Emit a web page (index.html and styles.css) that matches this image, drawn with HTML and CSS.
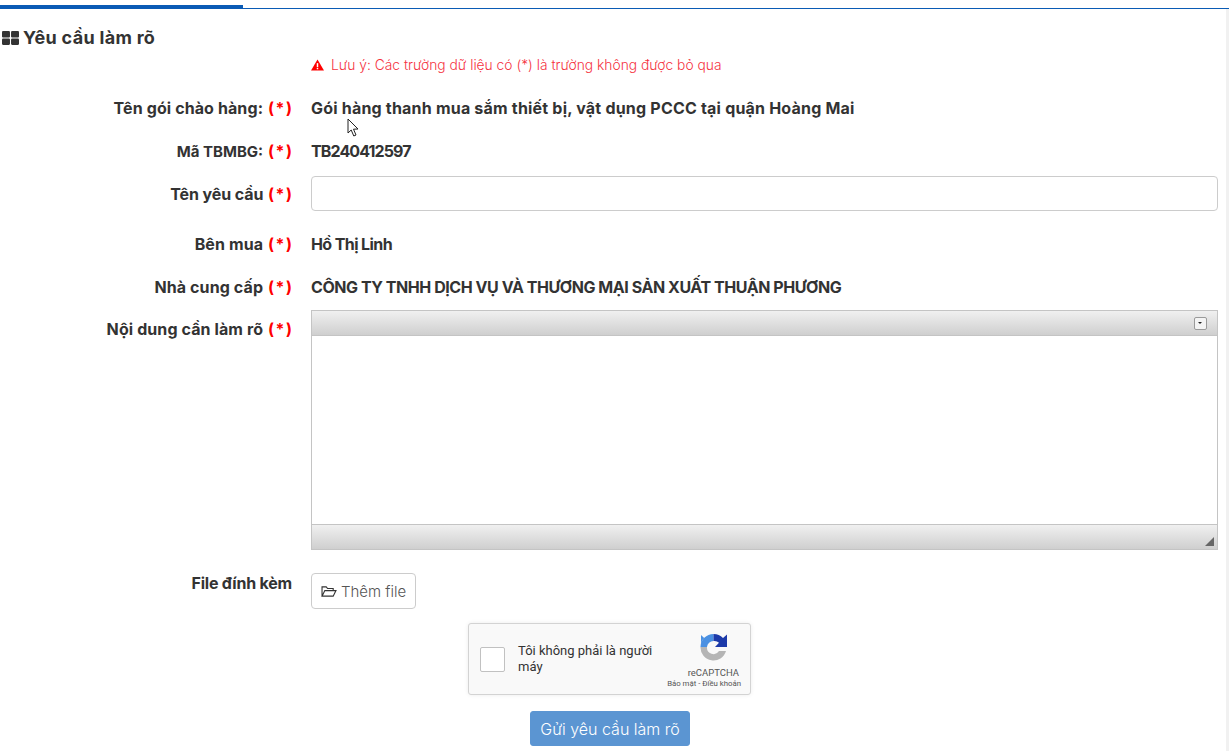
FILE: index.html
```html
<!DOCTYPE html>
<html lang="vi">
<head>
    <meta charset="UTF-8">
    <title>Yêu cầu làm rõ</title>
    <link rel="stylesheet" href="styles.css">
</head>
<body>
    <div class="tabs"><span class="tab-active"></span></div>
    <h4 class="section-title">
        <svg class="icon-th" viewBox="0 0 16 13" width="17" height="14"><rect x="0" y="0" width="7.5" height="6" rx="1"/><rect x="8.5" y="0" width="7.5" height="6" rx="1"/><rect x="0" y="7" width="7.5" height="6" rx="1"/><rect x="8.5" y="7" width="7.5" height="6" rx="1"/></svg>
        Yêu cầu làm rõ
    </h4>
    <form class="form">
        <p class="note">
            <svg viewBox="0 0 14 12" width="13" height="12"><path d="M7 0 L14 12 L0 12 Z" fill="#f00"/><rect x="6.2" y="4" width="1.6" height="4.2" fill="#fff"/><rect x="6.2" y="9" width="1.6" height="1.6" fill="#fff"/></svg>
            Lưu ý: Các trường dữ liệu có (*) là trường không được bỏ qua
        </p>
        <div class="row row-text">
            <label>Tên gói chào hàng: <em>(*)</em></label>
            <div class="value">Gói hàng thanh mua sắm thiết bị, vật dụng PCCC tại quận Hoàng Mai</div>
        </div>
        <div class="row row-text">
            <label><span class="caps">Mã TBMBG:</span> <em>(*)</em></label>
            <div class="value code">TB240412597</div>
        </div>
        <div class="row row-input">
            <label>Tên yêu cầu <em>(*)</em></label>
            <input class="input" type="text">
        </div>
        <div class="row row-text">
            <label>Bên mua <em>(*)</em></label>
            <div class="value name">Hồ Thị Linh</div>
        </div>
        <div class="row row-text">
            <label>Nhà cung cấp <em>(*)</em></label>
            <div class="value upper">CÔNG TY TNHH DỊCH VỤ VÀ THƯƠNG MẠI SẢN XUẤT THUẬN PHƯƠNG</div>
        </div>
        <div class="row row-editor">
            <label>Nội dung cần làm rõ <em>(*)</em></label>
            <div class="editor">
                <div class="editor-top"><span class="editor-collapse"></span></div>
                <div class="editor-body"></div>
                <div class="editor-bottom"><span class="editor-resize"></span></div>
            </div>
        </div>
        <div class="row row-file">
            <label>File đính kèm</label>
            <button type="button" class="btn-file">
                <svg viewBox="0 0 17 14" width="16" height="13" fill="none" stroke="#333" stroke-width="1.2"><path d="M1 12 V2 H5.5 L7 3.8 H13 V6 M1 12 L4 6 H16 L13 12 Z"/></svg>
                Thêm file
            </button>
        </div>
        <div class="captcha">
            <span class="captcha-box"></span>
            <span class="captcha-text">Tôi không phải là người máy</span>
            <div class="captcha-logo">
                <svg class="captcha-mark" viewBox="0 0 29 29" width="29" height="29">
                    <path d="M1.5 14 A13 13 0 0 1 5.2 5 L2 2 V14 Z M1.5 14 A13 13 0 0 1 14.5 1 V8 A6.5 6.5 0 0 0 8 14 Z" fill="#4a90e2"/>
                    <path d="M14.5 1 A13 13 0 0 1 24 5 L28 1.5 V14 H16 L20 9.8 A6.5 6.5 0 0 0 14.5 8 Z" fill="#1c3aa9"/>
                    <path d="M1.5 14 H8 A6.5 6.5 0 0 0 20 18 H27 A13 13 0 0 1 1.5 14 Z" fill="#b5b5b5"/>
                </svg>
                <span class="captcha-brand">reCAPTCHA</span>
                <span class="captcha-links">Bảo mật - Điều khoản</span>
            </div>
        </div>
        <div class="actions"><button type="button" class="btn-submit">Gửi yêu cầu làm rõ</button></div>
    </form>
    <svg class="cursor" viewBox="0 0 13 20" width="13" height="20"><path d="M1 1 V15 L4.2 12 L6.8 18 L9 17 L6.5 11.2 L11 11 Z" fill="#fff" stroke="#222" stroke-width="1"/></svg>
</body>
</html>
```

FILE: styles.css
```css
html, body {
    height: 100%;
}
body {
    margin: 0;
    position: relative;
    overflow: hidden;
    background: #fff;
    color: #333;
    font-family: "Inter", "Liberation Sans", sans-serif;
    font-size: 14px;
}
/* faint strip down the right edge */
body::after {
    content: "";
    position: absolute;
    top: 9px;
    right: 0;
    bottom: 0;
    width: 3px;
    background: #f1f1f1;
}
.tabs {
    height: 8px;
    border-bottom: 1px solid #0a5bb5;
}
.tab-active {
    display: block;
    width: 243px;
    height: 3px;
    background: #0a5bb5;
    transform: translateY(5px);
}
.section-title {
    margin: 19px 0 0 2px;
    font-size: 18px;
    letter-spacing: 0.3px;
    line-height: 20px;
    font-weight: 700;
    display: flex;
    align-items: center;
    gap: 4px;
}
.icon-th {
    fill: #333;
}
.form {
    margin: 0;
}
.note {
    margin: 7px 0 0 311px;
    height: 20px;
    line-height: 20px;
    font-size: 13.8px;
    font-weight: 300;
    color: #f5333f;
    display: flex;
    align-items: center;
    gap: 7px;
}
.row {
    display: grid;
    grid-template-columns: 292px 907px;
    column-gap: 19px;
}
.row label {
    text-align: right;
    font-weight: 700;
    font-size: 16px;
    letter-spacing: 0.1px;
    line-height: 20px;
}
.row em {
    font-style: normal;
    color: #f00;
    letter-spacing: 1.5px;
    margin-left: 1px;
    margin-right: -1.5px;
}
.row .caps {
    font-size: 15px;
    letter-spacing: 0;
}
.value {
    font-weight: 700;
    font-size: 16px;
    letter-spacing: 0.2px;
    line-height: 20px;
}
.code {
    letter-spacing: -0.9px;
}
.name {
    letter-spacing: -0.6px;
}
.upper {
    letter-spacing: -0.45px;
}
.row-text {
    padding-top: 23px;
}
.row-input {
    margin-top: 14px;
    align-items: center;
    height: 35px;
}
.row-input label {
    letter-spacing: -0.1px;
}
.input {
    box-sizing: border-box;
    width: 100%;
    height: 35px;
    border: 1px solid #ccc;
    border-radius: 4px;
    background: #fff;
}
.row-editor {
    margin-top: 13px;
}
.row-editor label {
    padding-top: 9px;
}
.editor {
    box-sizing: border-box;
    height: 240px;
    border: 1px solid #c4c4c4;
    display: flex;
    flex-direction: column;
}
.editor-top,
.editor-bottom {
    height: 24px;
    background: linear-gradient(#f0f0f0, #cfcfcf);
    position: relative;
}
.editor-body {
    flex: 1;
    background: #fff;
    border-top: 1px solid #c4c4c4;
    border-bottom: 1px solid #c4c4c4;
}
.editor-collapse {
    position: absolute;
    top: 6px;
    right: 10px;
    width: 11px;
    height: 11px;
    border: 1px solid #9a9a9a;
    border-radius: 2px;
    background: #f4f4f4;
}
.editor-collapse::after {
    content: "";
    position: absolute;
    left: 3px;
    top: 4px;
    border-left: 2.5px solid transparent;
    border-right: 2.5px solid transparent;
    border-top: 2px solid #222;
}
.editor-resize {
    position: absolute;
    right: 3px;
    bottom: 3px;
    width: 0;
    height: 0;
    border-left: 9px solid transparent;
    border-bottom: 9px solid #666;
}
.row-file {
    margin-top: 23px;
}
.row-file label {
    letter-spacing: -0.2px;
}
.btn-file {
    width: 105px;
    height: 36px;
    padding: 0;
    border: 1px solid #ccc;
    border-radius: 4px;
    background: #fff;
    color: #555;
    font: 300 15px "Inter", "Liberation Sans", sans-serif;
    display: flex;
    align-items: center;
    justify-content: center;
    gap: 4px;
}
.captcha {
    box-sizing: border-box;
    width: 283px;
    height: 72px;
    margin: 14px 0 0 468px;
    padding: 0 9px 0 11px;
    background: #f9f9f9;
    border: 1px solid #d3d3d3;
    border-radius: 3px;
    box-shadow: 0 0 4px rgba(0, 0, 0, 0.08);
    display: flex;
    align-items: center;
}
.captcha-box {
    flex: none;
    box-sizing: border-box;
    width: 25px;
    height: 25px;
    border: 1px solid #c1c1c1;
    border-radius: 2px;
    background: #fff;
}
.captcha-text {
    width: 150px;
    margin-left: 13px;
    font: 13px/16px "Roboto", sans-serif;
    color: #333;
}
.captcha-logo {
    margin-left: auto;
    padding-top: 4px;
    display: flex;
    flex-direction: column;
    align-items: flex-end;
    font-family: "Roboto", sans-serif;
    color: #555;
}
.captcha-mark {
    margin: 0 13px 5px 0;
}
.captcha-brand {
    font-size: 9.5px;
    line-height: 11px;
    margin-right: 2px;
}
.captcha-links {
    font-size: 7.8px;
    line-height: 11px;
    white-space: nowrap;
}
.actions {
    margin: 16px 0 0 530px;
}
.btn-submit {
    width: 160px;
    height: 35px;
    padding: 0;
    border: 1px solid #5b95d2;
    border-radius: 3px;
    background: #5b95d2;
    color: #fff;
    font: 300 16px "Inter", "Liberation Sans", sans-serif;
}
.cursor {
    position: absolute;
    left: 347px;
    top: 118px;
}
```
